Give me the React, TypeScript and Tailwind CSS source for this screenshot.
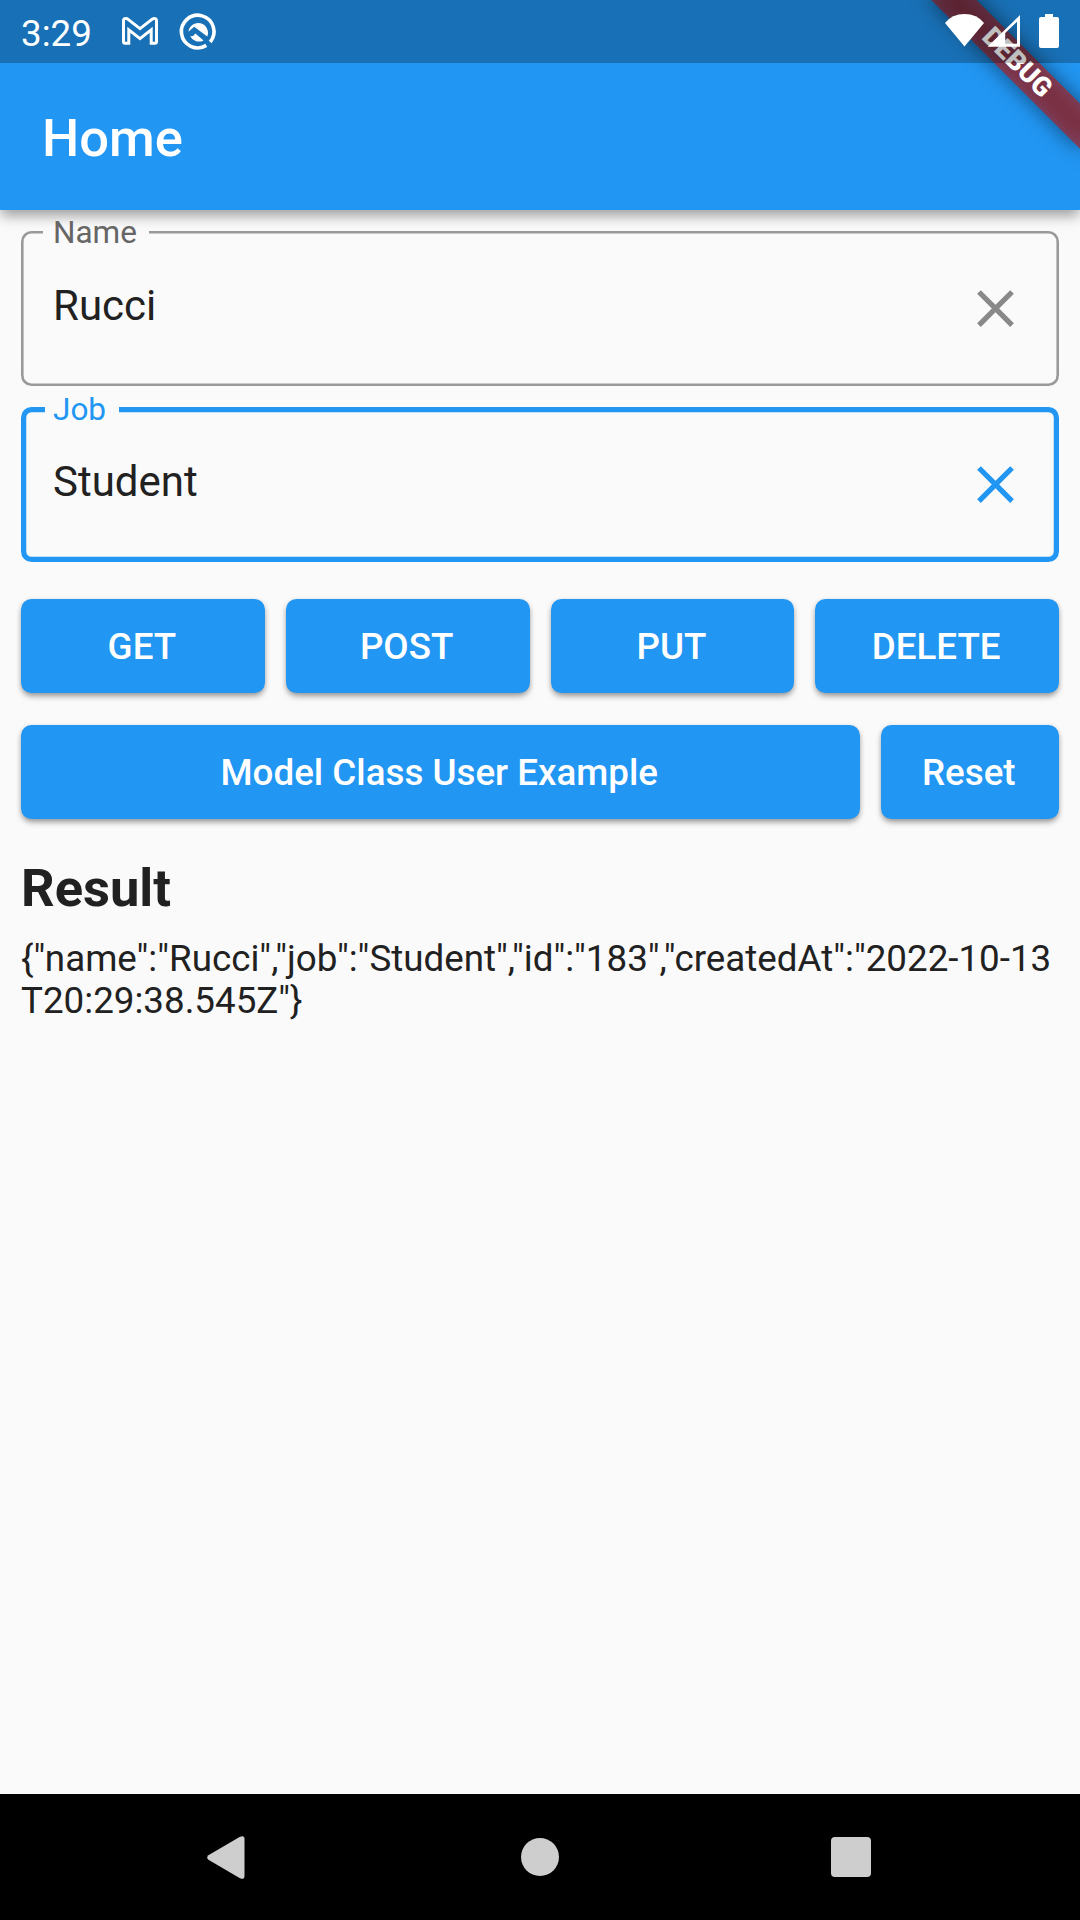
import type { ReactNode } from "react";

function StatusBar() {
  return (
    <div className="relative z-20 flex h-[63px] shrink-0 items-center bg-black/25 pl-[21px] text-white">
      <span className="w-[101px] pt-[3px] text-[36.75px] leading-[43px]">3:29</span>
      <svg className="h-[63px] w-[100px]" viewBox="122 0 100 63" fill="none">
        <path
          d="M123.5 20.7v21q0 1.5 1.6 1.5h3.7V29.8L140 38.6l11.2-8.8v13.4h3.7q1.6 0 1.6-1.5V20.7q0-2.4-2.6-2.2q-1 .1-2 .9l-11.9 9.2l-11.9-9.2q-1-.8-2-.9q-2.6-.2-2.6 2.2Z"
          stroke="white"
          strokeWidth="3"
        />
        <path d="M206.3 45.4A16.3 16.3 0 1 1 210.2 42" stroke="white" strokeWidth="3.6" />
        <path d="M188.4 31.8A9.8 9.8 0 1 1 207.2 36.6L194.2 26.8Z" fill="white" />
        <path d="M190.2 36.2Q193.5 36.6 195.4 33.4L203.6 40.4A9.8 9.8 0 0 1 190.2 36.2Z" fill="white" />
      </svg>
      <svg className="ml-auto h-[63px] w-[140px]" viewBox="940 0 140 63" fill="white">
        <path d="M964.5 46.6L945 23Q952 14 964.5 14T984 23Z" />
        <path fillRule="evenodd" d="M987.5 46.8L1020 15V46.8ZM1005.2 33V43.8H1017V21.8Z" />
        <path d="M1045 17V14h8v3h4q2 0 2 2v27q0 2-2 2h-16q-2 0-2-2V19q0-2 2-2Z" />
      </svg>
    </div>
  );
}

function DebugBanner() {
  return (
    <div className="pointer-events-none absolute top-0 right-0 z-10 h-[210px] w-[300px] overflow-hidden">
      <div className="absolute top-[47.36px] left-[131.9px] h-[31.5px] w-[210px] rotate-45">
        <div className="absolute inset-0 bg-black/50 blur-[10.4px]" />
        <div className="absolute inset-0 bg-[#b71c1c]/63" />
        <div className="relative text-center text-[26.8px] leading-[31.5px] font-black text-white">DEBUG</div>
      </div>
    </div>
  );
}

function CloseIcon() {
  return (
    <svg className="size-[63px]" viewBox="0 0 24 24" fill="currentColor">
      <path d="M19 6.41L17.59 5 12 10.59 6.41 5 5 6.41 10.59 12 5 17.59 6.41 19 12 13.41 17.59 19 19 17.59 13.41 12z" />
    </svg>
  );
}

function Field({ label, value, focused }: { label: string; value: string; focused?: boolean }) {
  return (
    <div
      className={
        "relative flex h-[154.6px] items-center justify-between rounded-[10.5px] pr-[32px] pl-[32px] " +
        (focused
          ? "text-[#2196f3] shadow-[inset_0_0_0_5.25px_#2196f3]"
          : "text-[#898989] shadow-[inset_0_0_0_2.6px_#999999]")
      }
    >
      <div
        className={
          "absolute top-0 flex items-center bg-[#fafafa] " +
          (focused ? "left-[24px] h-[6px] w-[74px] pl-[8px]" : "left-[22px] h-[3px] w-[106px] pl-[10px]")
        }
      >
        <span className={"text-[31.5px] leading-[37px] " + (focused ? "" : "text-[#666666]")}>{label}</span>
      </div>
      <span className="pb-[6px] text-[42px] leading-[49px] text-[#212121]">{value}</span>
      <CloseIcon />
    </div>
  );
}

function Button({ children, className }: { children: ReactNode; className: string }) {
  return (
    <button
      className={
        "h-[94.5px] rounded-[10.5px] bg-[#2196f3] pt-[2px] pr-[2px] text-[36.75px] leading-[43px] font-medium text-white shadow-[0_4px_6px_-1px_rgba(0,0,0,0.36),0_1px_5px_rgba(0,0,0,0.12)] " +
        className
      }
    >
      {children}
    </button>
  );
}

export default function App() {
  return (
    <div className="relative flex h-[1920px] w-[1080px] flex-col overflow-hidden bg-[#fafafa] font-['Roboto',sans-serif]">
      <header className="relative flex h-[210px] shrink-0 flex-col bg-[#2196f3] shadow-[0_7px_12px_-1px_rgba(0,0,0,0.36)]">
        <StatusBar />
        <div className="flex flex-1 items-center pl-[42px]">
          <h1 className="pt-[2px] text-[52.5px] leading-[62px] font-medium text-white">Home</h1>
        </div>
        <DebugBanner />
      </header>
      <main className="flex flex-1 flex-col px-[21px] pt-[21px]">
        <div className="flex flex-col gap-[21.4px]">
          <Field label="Name" value="Rucci" />
          <Field label="Job" value="Student" focused />
        </div>
        <div className="mt-[37.1px] flex gap-[21px]">
          <Button className="flex-1">GET</Button>
          <Button className="flex-1">POST</Button>
          <Button className="flex-1">PUT</Button>
          <Button className="flex-1">DELETE</Button>
        </div>
        <div className="mt-[31.5px] flex gap-[21px]">
          <Button className="flex-1">Model Class User Example</Button>
          <Button className="w-[178.5px]">Reset</Button>
        </div>
        <h2 className="mt-[37.8px] text-[52.5px] leading-[62px] font-bold text-[#212121]">Result</h2>
        <p className="mt-[19px] text-[36.75px] leading-[42.5px] break-all text-[#212121]">
          {'{"name":"Rucci","job":"Student","id":"183","createdAt":"2022-10-13T20:29:38.545Z"}'}
        </p>
      </main>
      <nav className="grid h-[126px] shrink-0 grid-cols-[311px_311px_311px] place-items-center justify-center bg-black">
        <svg className="size-[63px]" viewBox="0 0 63 63" fill="#cecece">
          <path d="M10.4 29.2L42 10.7Q46.5 9 46.5 13V50Q46.5 54 42 52.3L10.4 33.8Q8 31.5 10.4 29.2Z" />
        </svg>
        <div className="size-[38.4px] rounded-full bg-[#cecece]" />
        <div className="size-[40px] rounded-[4px] bg-[#cecece]" />
      </nav>
    </div>
  );
}
